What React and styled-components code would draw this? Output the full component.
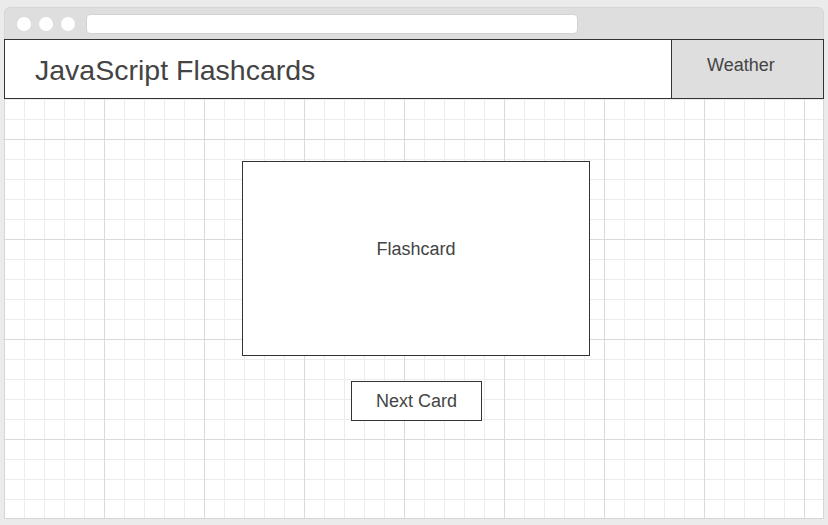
import React from "react";
import styled, { createGlobalStyle } from "styled-components";

const Global = createGlobalStyle`
  html, body { margin: 0; padding: 0; background: #ebebeb; }
  body { font-family: "Liberation Sans", Arial, sans-serif; color: #444; }
  * { box-sizing: border-box; }
`;

const Window = styled.div`
  margin: 7px 4px 0 4px;
  width: 820px;
  height: 512px;
  border: 1px solid #d6d6d6;
  border-radius: 6px 6px 0 0;
  background: #dedede;
  display: flex;
  flex-direction: column;
`;

const TitleBar = styled.div`
  height: 31px;
  display: flex;
  align-items: center;
  padding-left: 12px;
  gap: 8px;
  flex-shrink: 0;
`;

const Dot = styled.span`
  width: 14px;
  height: 14px;
  border-radius: 50%;
  background: #fff;
`;

const UrlBar = styled.div`
  margin-left: 3px;
  width: 492px;
  height: 20px;
  background: #fff;
  border: 1px solid #d2d2d2;
  border-radius: 4px;
`;

const Content = styled.div`
  flex: 1;
  display: flex;
  flex-direction: column;
  background-color: #fff;
  background-image:
    linear-gradient(to right, transparent 99px, #dadada 99px),
    linear-gradient(to bottom, transparent 99px, #dadada 99px),
    linear-gradient(to right, transparent 19px, #ececec 19px),
    linear-gradient(to bottom, transparent 19px, #ececec 19px);
  background-size: 100px 100px, 100px 100px, 20px 20px, 20px 20px;
  background-position: 0 1px;
`;

const Header = styled.header`
  height: 60px;
  margin: 0 -1px;
  border: 1px solid #333;
  display: flex;
  background: #fff;
`;

const Title = styled.h1`
  flex: 1;
  margin: 0;
  padding: 14px 0 0 30px;
  font-size: 28.5px;
  font-weight: 400;
  color: #444;
`;

const NavItem = styled.div`
  width: 152px;
  border-left: 1px solid #333;
  background: #dedede;
  display: flex;
  padding: 15px 0 0 35px;
  font-size: 18px;
  color: #444;
`;

const Main = styled.main`
  flex: 1;
  display: flex;
  flex-direction: column;
  align-items: center;
  padding: 62px 0 0 4px;
  gap: 25px;
`;

const Card = styled.div`
  width: 348px;
  height: 195px;
  border: 1px solid #333;
  background: #fff;
  display: flex;
  justify-content: center;
  padding-top: 77px;
  font-size: 18px;
  color: #444;
`;

const Button = styled.button`
  width: 131px;
  height: 40px;
  border: 1px solid #333;
  background: #fff;
  font-family: inherit;
  font-size: 18px;
  color: #444;
  padding: 1px 0 0;
  margin-left: 1px;
  cursor: pointer;
`;

export default function App() {
  return (
    <>
      <Global />
      <Window>
        <TitleBar>
          <Dot />
          <Dot />
          <Dot />
          <UrlBar />
        </TitleBar>
        <Content>
          <Header>
            <Title>JavaScript Flashcards</Title>
            <NavItem>Weather</NavItem>
          </Header>
          <Main>
            <Card>Flashcard</Card>
            <Button>Next Card</Button>
          </Main>
        </Content>
      </Window>
    </>
  );
}
